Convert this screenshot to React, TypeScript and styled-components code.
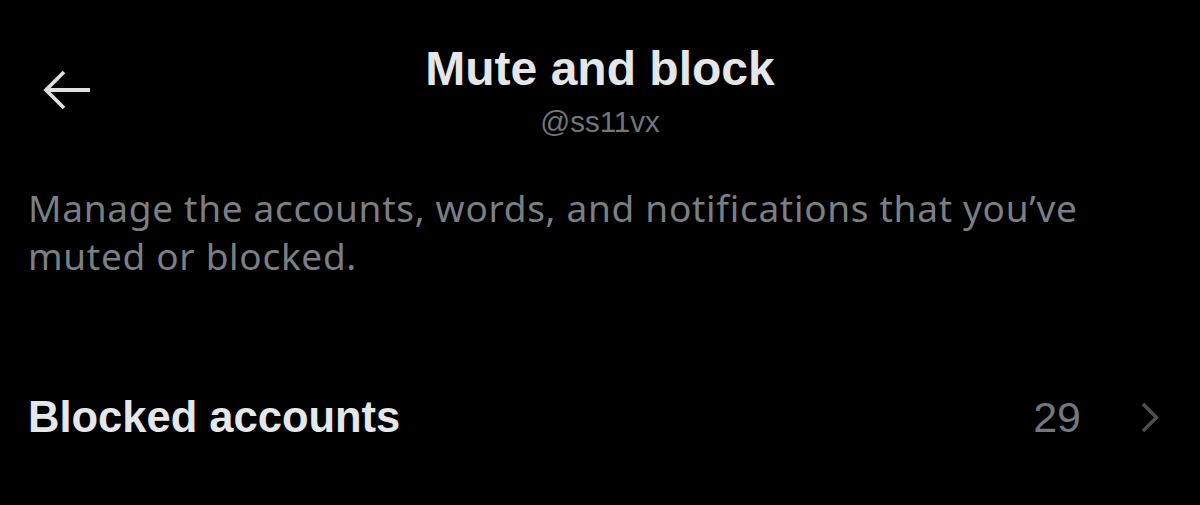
import React from "react";
import styled, { createGlobalStyle } from "styled-components";

const Global = createGlobalStyle`
  html, body { margin: 0; padding: 0; background: #000; }
  body { width: 1200px; height: 505px; overflow: hidden; }
`;

const Page = styled.div`
  width: 1200px;
  height: 505px;
  background: #000;
  box-sizing: border-box;
  padding: 41px 41px 0 28px;
  display: flex;
  flex-direction: column;
`;

const Header = styled.header`
  display: grid;
  grid-template-columns: 1fr auto 1fr;
  align-items: center;
  margin-right: -13px;
`;

const BackButton = styled.button`
  justify-self: start;
  margin-left: 15px;
  padding: 0;
  border: 0;
  background: none;
  display: flex;
  align-items: center;
  cursor: pointer;
`;

const TitleBlock = styled.div`
  display: flex;
  flex-direction: column;
  align-items: center;
`;

const Title = styled.h1`
  margin: 0;
  font-family: "Liberation Sans", Arial, sans-serif;
  font-weight: 700;
  font-size: 48px;
  line-height: 56px;
  color: #e4e6e7;
`;

const Handle = styled.div`
  margin-top: 8px;
  font-family: "Liberation Sans", Arial, sans-serif;
  font-size: 29.5px;
  line-height: 34px;
  color: #71767b;
`;

const Description = styled.p`
  margin: 45px 0 0;
  font-family: "Noto Sans", sans-serif;
  font-size: 37px;
  letter-spacing: 0.7px;
  line-height: 48px;
  color: #7a7f84;
`;

const Row = styled.div`
  margin-top: 112px;
  display: flex;
  align-items: center;
`;

const RowLabel = styled.span`
  flex: 1;
  font-family: "Liberation Sans", Arial, sans-serif;
  font-weight: 700;
  font-size: 43.5px;
  line-height: 50px;
  color: #e4e6e7;
`;

const RowValue = styled.span`
  font-family: "Liberation Sans", Arial, sans-serif;
  font-size: 43px;
  line-height: 50px;
  color: #73787d;
  margin-right: 60px;
`;

const Icon = styled.svg`
  display: block;
  flex: none;
`;

export default function App() {
  return (
    <>
      <Global />
      <Page>
        <Header>
          <BackButton aria-label="Back">
            <Icon width="48" height="44" viewBox="0 0 48 44" fill="none">
              <path
                d="M47 22H4M21 4L3 22l18 18"
                stroke="#dedfe0"
                strokeWidth="3.8"
                strokeLinecap="butt"
                strokeLinejoin="miter"
              />
            </Icon>
          </BackButton>
          <TitleBlock>
            <Title>Mute and block</Title>
            <Handle>@ss11vx</Handle>
          </TitleBlock>
          <div />
        </Header>
        <Description>
          Manage the accounts, words, and notifications that you’ve muted or blocked.
        </Description>
        <Row>
          <RowLabel>Blocked accounts</RowLabel>
          <RowValue>29</RowValue>
          <Icon width="18" height="31" viewBox="0 0 18 31" fill="none">
            <path
              d="M2 2l13.5 13.5L2 29"
              stroke="#4d5154"
              strokeWidth="3.4"
              strokeLinejoin="miter"
            />
          </Icon>
        </Row>
      </Page>
    </>
  );
}
